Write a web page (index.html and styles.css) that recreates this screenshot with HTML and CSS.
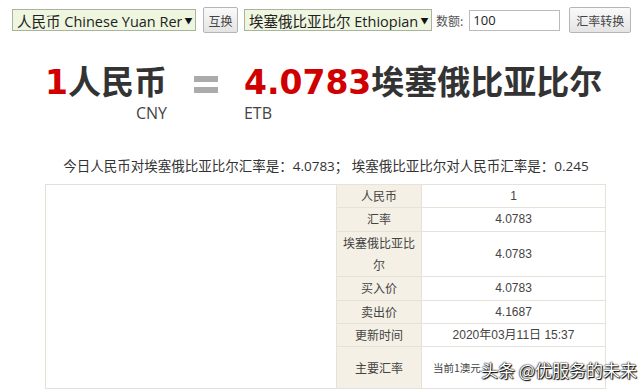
FILE: index.html
```html
<!DOCTYPE html>
<html lang="zh-CN">
<head>
    <meta charset="UTF-8">
    <title>人民币兑换埃塞俄比亚比尔汇率</title>
    <link rel="stylesheet" href="styles.css">
</head>
<body>

    <div class="toolbar">
        <div class="select select-from">
            <span class="select-text">人民币 Chinese Yuan Renminbi</span>
            <span class="select-arrow">▼</span>
        </div>
        <button class="btn btn-swap">互换</button>
        <div class="select select-to">
            <span class="select-text">埃塞俄比亚比尔 Ethiopian Birr</span>
            <span class="select-arrow">▼</span>
        </div>
        <label class="amount-label">数额:</label>
        <input class="amount" type="text" value="100">
        <button class="btn btn-convert">汇率转换</button>
    </div>

    <div class="hero">
        <div class="side side-from">
            <div class="big"><span class="num">1</span>人民币</div>
            <div class="code">CNY</div>
        </div>
        <div class="equals"><span></span><span></span></div>
        <div class="side side-to">
            <div class="big"><span class="num">4.0783</span>埃塞俄比亚比尔</div>
            <div class="code">ETB</div>
        </div>
    </div>

    <p class="rate-line">今日人民币对埃塞俄比亚比尔汇率是：4.0783； 埃塞俄比亚比尔对人民币汇率是：0.245</p>

    <div class="result">
        <div class="chart-box"></div>
        <table class="info">
            <tr><th>人民币</th><td>1</td></tr>
            <tr><th>汇率</th><td>4.0783</td></tr>
            <tr class="tall"><th>埃塞俄比亚比<br>尔</th><td>4.0783</td></tr>
            <tr><th>买入价</th><td>4.0783</td></tr>
            <tr><th>卖出价</th><td>4.1687</td></tr>
            <tr><th>更新时间</th><td>2020年03月11日 15:37</td></tr>
            <tr class="last"><th>主要汇率</th><td class="main-rate">当前1澳元</td></tr>
        </table>
        <div class="watermark">头条 @优服务的未来</div>
    </div>

</body>
</html>
```

FILE: styles.css
```css
body {
    margin: 0;
    background: #fff;
    color: #333;
    font-family: "Open Sans", "Noto Sans CJK SC", sans-serif;
    position: relative;
    height: 389px;
    overflow: hidden;
}

.toolbar {
    display: flex;
    align-items: center;
    padding: 7px 0 0 12px;
    height: 26px;
}

.select {
    display: flex;
    align-items: center;
    height: 20px;
    border: 1px solid #a9b3a0;
    background: #eef6df;
    font-size: 14.5px;
    color: #222;
    overflow: hidden;
}

.select-text {
    flex: 1;
    min-width: 0;
    white-space: nowrap;
    overflow: hidden;
    text-overflow: clip;
    padding-left: 4px;
}

.select-arrow {
    flex: none;
    font-size: 8px;
    width: 13px;
    text-align: center;
    color: #111;
    background: #eef6df;
}

.select-from {
    width: 182px;
}

.select-to {
    width: 186px;
}

.btn {
    height: 26px;
    border: 1px solid #b5b5b5;
    border-radius: 2px;
    background: linear-gradient(#fafafa, #e4e4e4);
    font-family: "Noto Sans CJK SC", sans-serif;
    font-size: 12px;
    color: #444;
    padding: 0;
}

.btn-swap {
    width: 35px;
    margin: 0 6px 0 7px;
}

.amount-label {
    font-family: "Noto Sans CJK SC", sans-serif;
    font-size: 12px;
    color: #555;
    margin: 0 6px 0 4px;
}

.amount {
    width: 83px;
    height: 17px;
    border: 1px solid #bbb;
    padding: 1px 3px;
    font-family: "Open Sans", sans-serif;
    font-size: 13px;
    color: #222;
}

.btn-convert {
    width: 62px;
    margin-left: 9px;
}

.hero {
    display: flex;
    align-items: flex-start;
    padding: 27px 0 0 45px;
}

.big {
    font-family: "Noto Sans CJK SC", sans-serif;
    font-weight: bold;
    font-size: 33px;
    line-height: 40px;
    color: #333;
    white-space: nowrap;
}

.num {
    font-family: "DejaVu Sans", sans-serif;
    color: #d00000;
}

.code {
    font-size: 16px;
    line-height: 20px;
    color: #444;
}

.side-from .code {
    text-align: right;
}

.equals {
    display: flex;
    flex-direction: column;
    gap: 5px;
    margin: 16px 26px 0 27px;
}

.equals span {
    width: 24px;
    height: 6px;
    background: #ababab;
}

.rate-line {
    margin: 34px 0 0 12px;
    text-align: center;
    font-size: 13.5px;
    color: #333;
    line-height: 18px;
}

.result {
    display: flex;
    margin: 9px 0 0 45px;
}

.chart-box {
    width: 290px;
    height: 203px;
    border: 1px solid #e3e0d8;
    border-right: 0;
}

.info {
    border-collapse: collapse;
    width: 270px;
    font-size: 12px;
    color: #444;
    font-family: "Liberation Sans", "Noto Sans CJK SC", sans-serif;
}

.info th,
.info td {
    border: 1px solid #e6e2d9;
    height: 22px;
    padding: 0;
    text-align: center;
    line-height: 22px;
}

.info th {
    width: 84px;
    background: #f4f0e6;
    font-weight: normal;
    font-family: "Noto Sans CJK SC", sans-serif;
}

.info .tall th,
.info .tall td {
    height: 44px;
}

.info .last th,
.info .last td {
    height: 40px;
}

.info .main-rate {
    text-align: left;
    padding-left: 11px;
    white-space: nowrap;
    font-family: "Noto Sans CJK SC", sans-serif;
    font-size: 10.5px;
}

.watermark {
    position: absolute;
    left: 481px;
    top: 357px;
    font-family: "Noto Sans CJK SC", sans-serif;
    font-size: 17px;
    color: #fff;
    text-shadow: 0 0 2px #000, 0 0 1px #000, 1px 1px 1px #000;
}
```
